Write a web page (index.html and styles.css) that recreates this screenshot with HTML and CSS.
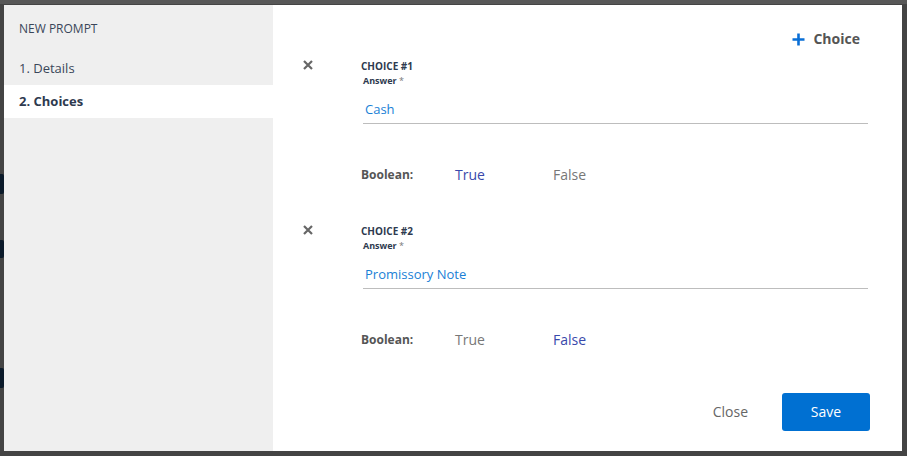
FILE: index.html
```html
<!DOCTYPE html>
<html>
<head>
<meta charset="utf-8">
<link rel="stylesheet" href="styles.css">
</head>
<body>
<div class="backdrop">
  <span class="mark mark-a"></span>
  <span class="mark mark-b"></span>
  <span class="mark mark-c"></span>
  <div class="modal">
    <aside class="sidebar">
      <div class="side-title">NEW PROMPT</div>
      <div class="nav-item">1. Details</div>
      <div class="nav-item active">2. Choices</div>
    </aside>
    <main class="main">
      <div class="toolbar">
        <button class="add-choice">
          <svg width="13" height="13" viewBox="0 0 13 13"><path d="M6.5 0.5v12M0.5 6.5h12" stroke="#0a6fd6" stroke-width="2.6" fill="none"/></svg>
          <span>Choice</span>
        </button>
      </div>

      <section class="choice">
        <div class="remove"><svg width="10" height="10" viewBox="0 0 10 10"><path d="M1 1l8 8M9 1l-8 8" stroke="#666" stroke-width="2.2" fill="none"/></svg></div>
        <div class="fields">
          <div class="choice-title">CHOICE #1</div>
          <div class="answer-label">Answer <span class="req">*</span></div>
          <div class="input">Cash</div>
          <div class="bool-row">
            <span class="bool-label">Boolean:</span>
            <span class="bool-opt selected">True</span>
            <span class="bool-opt">False</span>
          </div>
        </div>
      </section>

      <section class="choice">
        <div class="remove"><svg width="10" height="10" viewBox="0 0 10 10"><path d="M1 1l8 8M9 1l-8 8" stroke="#666" stroke-width="2.2" fill="none"/></svg></div>
        <div class="fields">
          <div class="choice-title">CHOICE #2</div>
          <div class="answer-label">Answer <span class="req">*</span></div>
          <div class="input">Promissory Note</div>
          <div class="bool-row">
            <span class="bool-label">Boolean:</span>
            <span class="bool-opt">True</span>
            <span class="bool-opt selected">False</span>
          </div>
        </div>
      </section>

      <div class="footer">
        <button class="btn-close">Close</button>
        <button class="btn-save">Save</button>
      </div>
    </main>
  </div>
</div>
</body>
</html>
```

FILE: styles.css
```css
* { box-sizing: border-box; }
html, body { margin: 0; padding: 0; }
body {
  background: #474747;
  font-family: "Open Sans", "Noto Sans", sans-serif;
  width: 907px;
  height: 456px;
  overflow: hidden;
}
.backdrop {
  position: relative;
  height: 456px;
  padding: 5px 5px 5px 4px;
  background: linear-gradient(#575757 0, #575757 4px, #444 4px);
}
.mark {
  position: absolute;
  width: 4px;
  background: #0b1a2a;
  border-radius: 0 2px 2px 0;
}
.mark-a { left: 0; top: 174px; height: 20px; }
.mark-b { left: 0; top: 240px; height: 18px; }
.mark-c { left: 0; top: 368px; height: 20px; }
.modal {
  display: flex;
  height: 446px;
  width: 898px;
  background: #fff;
}
.sidebar {
  width: 269px;
  background: #efefef;
  color: #3a4659;
}
.side-title {
  font-size: 12px;
  line-height: 16px;
  padding: 16px 15px 15px;
}
.nav-item {
  height: 33px;
  line-height: 33px;
  padding-left: 15px;
  font-size: 13px;
}
.nav-item.active {
  background: #fff;
  font-weight: 700;
  color: #2e3a4f;
}
.main {
  flex: 1;
  padding: 24px 34px 0 0;
  display: flex;
  flex-direction: column;
}
.toolbar {
  display: flex;
  justify-content: flex-end;
  height: 20px;
  padding-right: 8px;
}
.add-choice {
  display: flex;
  align-items: center;
  gap: 8px;
  border: 0;
  background: none;
  padding: 0;
  font: 700 14px/20px "Open Sans", sans-serif;
  color: #555;
}
.choice {
  display: grid;
  grid-template-columns: 88px 1fr;
  margin-top: 10px;
}
.choice + .choice { margin-top: 40px; }
.remove {
  padding-left: 30px;
  padding-top: 1px;
  line-height: 0;
}
.choice-title {
  font-size: 10px;
  font-weight: 700;
  line-height: 14px;
  color: #2e3a4f;
}
.answer-label {
  margin-top: 2px;
  padding-left: 2px;
  font-size: 9px;
  font-weight: 700;
  line-height: 12px;
  color: #2e3a4f;
}
.req { color: #777; font-weight: 400; }
.input {
  margin-left: 2px;
  padding: 13px 2px 5px;
  font-size: 13px;
  line-height: 18px;
  color: #1a7fd6;
  border-bottom: 1px solid #bdbdbd;
}
.bool-row {
  display: flex;
  align-items: center;
  margin-top: 40px;
  height: 20px;
}
.bool-label {
  width: 94px;
  font-size: 12px;
  font-weight: 700;
  color: #555;
}
.bool-opt {
  width: 98px;
  font-size: 14px;
  color: #777;
}
.bool-opt.selected { color: #3949ab; }
.footer {
  display: flex;
  justify-content: flex-end;
  align-items: center;
  gap: 34px;
  margin-top: 44px;
  margin-right: -2px;
}
.btn-close {
  border: 0;
  background: none;
  padding: 0;
  font: 400 14px/20px "Open Sans", sans-serif;
  color: #666;
}
.btn-save {
  width: 88px;
  height: 38px;
  border: 0;
  border-radius: 3px;
  background: #0070d2;
  color: #fff;
  font: 400 14px/20px "Open Sans", sans-serif;
}
```
